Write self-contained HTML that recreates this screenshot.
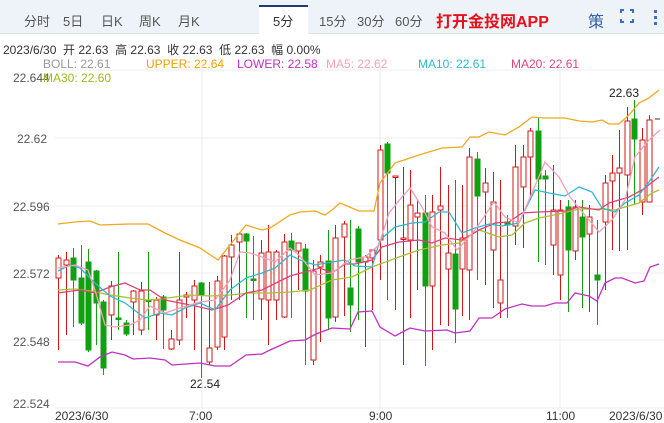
<!DOCTYPE html><html><head><meta charset="utf-8"><style>
body{margin:0;width:664px;height:423px;background:#fff;overflow:hidden;font-family:"Liberation Sans","Noto Sans CJK SC",sans-serif;position:relative}
.bar{position:absolute;left:0;top:0;width:664px;height:33px;background:#eef3fa;border-bottom:1px solid #dde4ee}
.t{position:absolute;top:11px;font-size:13px;color:#555}
.act{position:absolute;left:259px;top:5px;width:49px;height:29px;background:#fff;border-top:2px solid #1e3c7a}
.txt{position:absolute;font-size:12px;white-space:nowrap}
svg{position:absolute;left:0;top:0}
</style></head><body>
<div class="bar"></div><div class="act"></div>
<span class="t" style="left:24px">分时</span><span class="t" style="left:63px">5日</span><span class="t" style="left:101px">日K</span><span class="t" style="left:139px">周K</span><span class="t" style="left:178px">月K</span><span class="t" style="left:273px;color:#333">5分</span><span class="t" style="left:319px">15分</span><span class="t" style="left:357px">30分</span><span class="t" style="left:395px">60分</span>
<span class="t" style="left:436px;top:8px;font-size:16px;font-weight:bold;color:#e8101a">打开金投网APP</span>
<span class="t" style="left:588px;top:8px;font-size:16px;color:#3060a8">策</span>
<div style="position:absolute;left:620px;top:9px;width:14px;height:14px;border:2px solid #3a70c0;box-sizing:border-box"></div>
<div style="position:absolute;left:624px;top:7px;width:6px;height:18px;background:#eef3fa"></div>
<div style="position:absolute;left:618px;top:13px;width:18px;height:6px;background:#eef3fa"></div>
<div style="position:absolute;left:654px;top:10px;width:3px;height:3px;background:#3a70c0;box-shadow:0 6px 0 #3a70c0,0 12px 0 #3a70c0"></div>
<span class="txt" style="left:3px;top:41px;color:#333">2023/6/30 &nbsp;开 22.63 &nbsp;高 22.63 &nbsp;收 22.63 &nbsp;低 22.63 &nbsp;幅 0.00%</span>
<span class="txt" style="left:43px;top:57px;color:#999">BOLL: 22.61</span>
<span class="txt" style="left:146px;top:57px;color:#f0a000">UPPER: 22.64</span>
<span class="txt" style="left:237px;top:57px;color:#c030c0">LOWER: 22.58</span>
<span class="txt" style="left:326px;top:57px;color:#f4a0b8">MA5: 22.62</span>
<span class="txt" style="left:418px;top:57px;color:#30b8d0">MA10: 22.61</span>
<span class="txt" style="left:511px;top:57px;color:#e04080">MA20: 22.61</span>
<span class="txt" style="left:13px;top:71px;color:#555">22.644</span><span class="txt" style="left:43px;top:71px;color:#a0b820">MA30: 22.60</span>
<span class="txt" style="left:17px;top:132px;color:#555">22.62</span>
<span class="txt" style="left:13px;top:200px;color:#555">22.596</span>
<span class="txt" style="left:13px;top:267px;color:#555">22.572</span>
<span class="txt" style="left:13px;top:335px;color:#555">22.548</span>
<span class="txt" style="left:13px;top:397px;color:#555">22.524</span>
<span class="txt" style="left:55px;top:409px;color:#333">2023/6/30</span>
<span class="txt" style="left:189px;top:409px;color:#333">7:00</span>
<span class="txt" style="left:369px;top:409px;color:#333">9:00</span>
<span class="txt" style="left:546px;top:409px;color:#333">11:00</span>
<span class="txt" style="left:609px;top:409px;color:#333">2023/6/30</span>
<span class="txt" style="left:190px;top:377px;color:#222">22.54</span>
<span class="txt" style="left:609px;top:86px;color:#222">22.63</span>
<svg id="s" width="664" height="423"></svg>
<script>
var s='';
[70,138,206,273,340,408].forEach(function(y){s+='<line x1="55" x2="664" y1="'+y+'" y2="'+y+'" stroke="#ececec"/>'});
[202,380,560].forEach(function(x){s+='<line x1="'+x+'" x2="'+x+'" y1="62" y2="408" stroke="#ececec"/>'});
var C=[[58,'r',258,278,255,350],[66,'r',260,265,252,335],[73,'g',258,280,248,327],[81,'g',278,323,245,325],[88,'g',262,350,249,352],[96,'g',271,303,270,345],[103,'g',302,368,300,375],[111,'r',286,315,281,340],[118,'g',318,319,252,330],[126,'g',323,334,320,336],[133,'r',291,302,290,335],[141,'r',291,330,282,335],[148,'g',300,301,252,330],[156,'r',300,315,297,340],[163,'g',297,310,295,349],[171,'r',339,349,330,350],[179,'r',300,340,252,345],[186,'r',295,297,292,318],[194,'r',286,300,280,350],[201,'g',283,295,282,378],[209,'r',348,362,282,365],[217,'r',281,347,276,350],[224,'r',256,337,255,350],[231,'r',245,257,235,300],[239,'r',234,242,232,300],[246,'g',234,241,233,318],[253,'g',279,280,236,320],[261,'r',253,299,240,320],[268,'r',252,300,225,345],[276,'r',252,300,250,320],[284,'r',242,317,234,318],[291,'g',241,250,233,318],[298,'r',243,251,243,290],[305,'g',249,291,244,365],[313,'r',271,360,260,365],[320,'r',262,267,255,342],[328,'g',261,318,230,330],[335,'r',238,317,225,322],[344,'r',224,237,221,316],[350,'g',288,305,220,332],[358,'g',229,262,226,320],[365,'r',257,262,255,347],[372,'r',250,258,250,310],[380,'r',150,240,145,280],[387,'g',144,173,142,300],[395,'r',176,177,176,310],[403,'r',238,239,167,365],[410,'r',205,240,170,318],[417,'r',213,217,200,290],[425,'g',213,286,195,366],[432,'r',212,286,195,350],[440,'r',206,210,167,325],[448,'r',253,269,185,326],[455,'g',254,309,180,343],[462,'r',238,269,185,316],[469,'r',157,270,148,320],[477,'g',159,196,152,280],[485,'r',183,192,168,285],[493,'r',202,250,172,308],[500,'r',280,303,180,318],[507,'g',222,225,215,318],[515,'r',167,226,145,245],[523,'r',157,187,145,248],[530,'r',131,157,128,200],[538,'g',131,179,118,262],[545,'g',176,179,170,265],[553,'r',210,245,165,275],[560,'r',210,275,200,300],[568,'g',207,250,200,312],[575,'r',207,251,200,260],[582,'g',217,237,200,308],[589,'r',217,234,205,312],[597,'g',275,280,220,325],[605,'r',183,222,175,290],[612,'r',173,181,155,250],[619,'r',168,173,130,251],[627,'r',121,175,107,250],[634,'g',119,139,100,205],[642,'r',140,202,128,215],[649,'r',120,202,115,200]];
C.forEach(function(c){var x=c[0]+0.5,col=c[1]=='r'?'#d01818':'#10a010';
s+='<line x1="'+x+'" x2="'+x+'" y1="'+c[4]+'" y2="'+Math.max(c[5],c[3])+'" stroke="'+col+'" stroke-width="1"/>';
var h=Math.max(c[3]-c[2],1.5);
s+='<rect x="'+(x-2.5)+'" y="'+c[2]+'" width="5" height="'+h+'" fill="'+(c[1]=='r'?'#fff':col)+'" stroke="'+col+'" stroke-width="1"/>';});
function P(pts,col){s+='<polyline fill="none" stroke="'+col+'" stroke-width="1.3" points="'+pts+'"/>';}
P('58,224 75,222 90,221 100,225 130,224 148,224 165,233 180,240 200,248 218,260 246,225 262,230 270,228 290,215 300,212 315,211 325,215 332,210 340,203 359,211 374,211 380,183 395,163 419,155 442,148 462,147 470,137 479,137 489,132 505,135 519,127 532,117 545,118 565,118 579,121 592,122 602,120 609,124 619,124 629,115 639,103 649,98 659,90','#f0a820');
P('58,362 75,362 88,366 100,357 112,352 125,355 133,359 150,358 165,360 172,365 200,363 215,366 230,366 246,355 262,354 270,350 290,341 305,340 316,334 332,328 350,329 358,312 372,311 380,327 395,336 410,328 425,331 447,330 455,333 470,331 479,318 492,318 505,309 522,304 532,306 545,306 555,303 567,303 575,293 589,296 597,301 605,283 615,278 622,278 635,283 644,281 650,267 659,264','#c030c0');
P('58,290 75,289 90,291 110,295 130,298 148,300 160,299 175,297 190,295 210,296 230,295 250,293 270,293 290,292 310,290 332,280 352,277 372,267 399,257 419,250 442,245 459,243 479,230 499,237 512,235 525,223 539,218 559,214 579,209 599,209 615,210 625,207 639,203 652,193 659,190','#a8c030');
P('58,293 80,290 95,293 110,287 125,283 140,290 150,290 165,300 185,304 200,307 212,310 228,305 246,293 262,290 278,282 290,276 305,272 320,268 332,273 345,264 355,264 372,260 382,247 399,242 419,240 432,243 445,238 462,240 479,230 495,223 509,222 522,213 539,212 565,211 579,207 599,210 609,203 619,200 629,197 642,190 659,177','#e0407a');
P('58,271 70,265 80,268 95,283 110,296 125,303 145,318 160,313 172,315 185,308 200,303 215,310 230,290 246,278 262,273 275,268 290,255 300,260 315,265 332,262 345,260 355,266 372,267 380,240 395,227 412,223 425,222 439,212 449,212 462,233 475,228 489,224 502,226 519,223 525,210 535,190 549,193 565,196 579,187 592,192 602,208 615,212 625,203 639,195 649,182 659,167','#30b8d0');
P('58,268 75,265 88,270 95,290 105,325 115,327 130,325 140,320 150,306 165,313 180,308 190,305 200,302 215,300 230,280 240,252 250,253 262,257 275,262 290,248 300,256 315,275 332,273 349,260 365,257 379,245 389,213 402,197 410,188 422,207 432,227 445,233 457,250 475,230 494,202 505,217 519,223 532,193 545,162 559,177 570,197 579,208 589,220 599,232 612,220 625,200 635,157 649,140 660,130','#f4a0b8');
s+='<line x1="655" x2="660" y1="119" y2="119" stroke="#333"/>';
document.getElementById('s').innerHTML=s;
</script>
</body></html>
